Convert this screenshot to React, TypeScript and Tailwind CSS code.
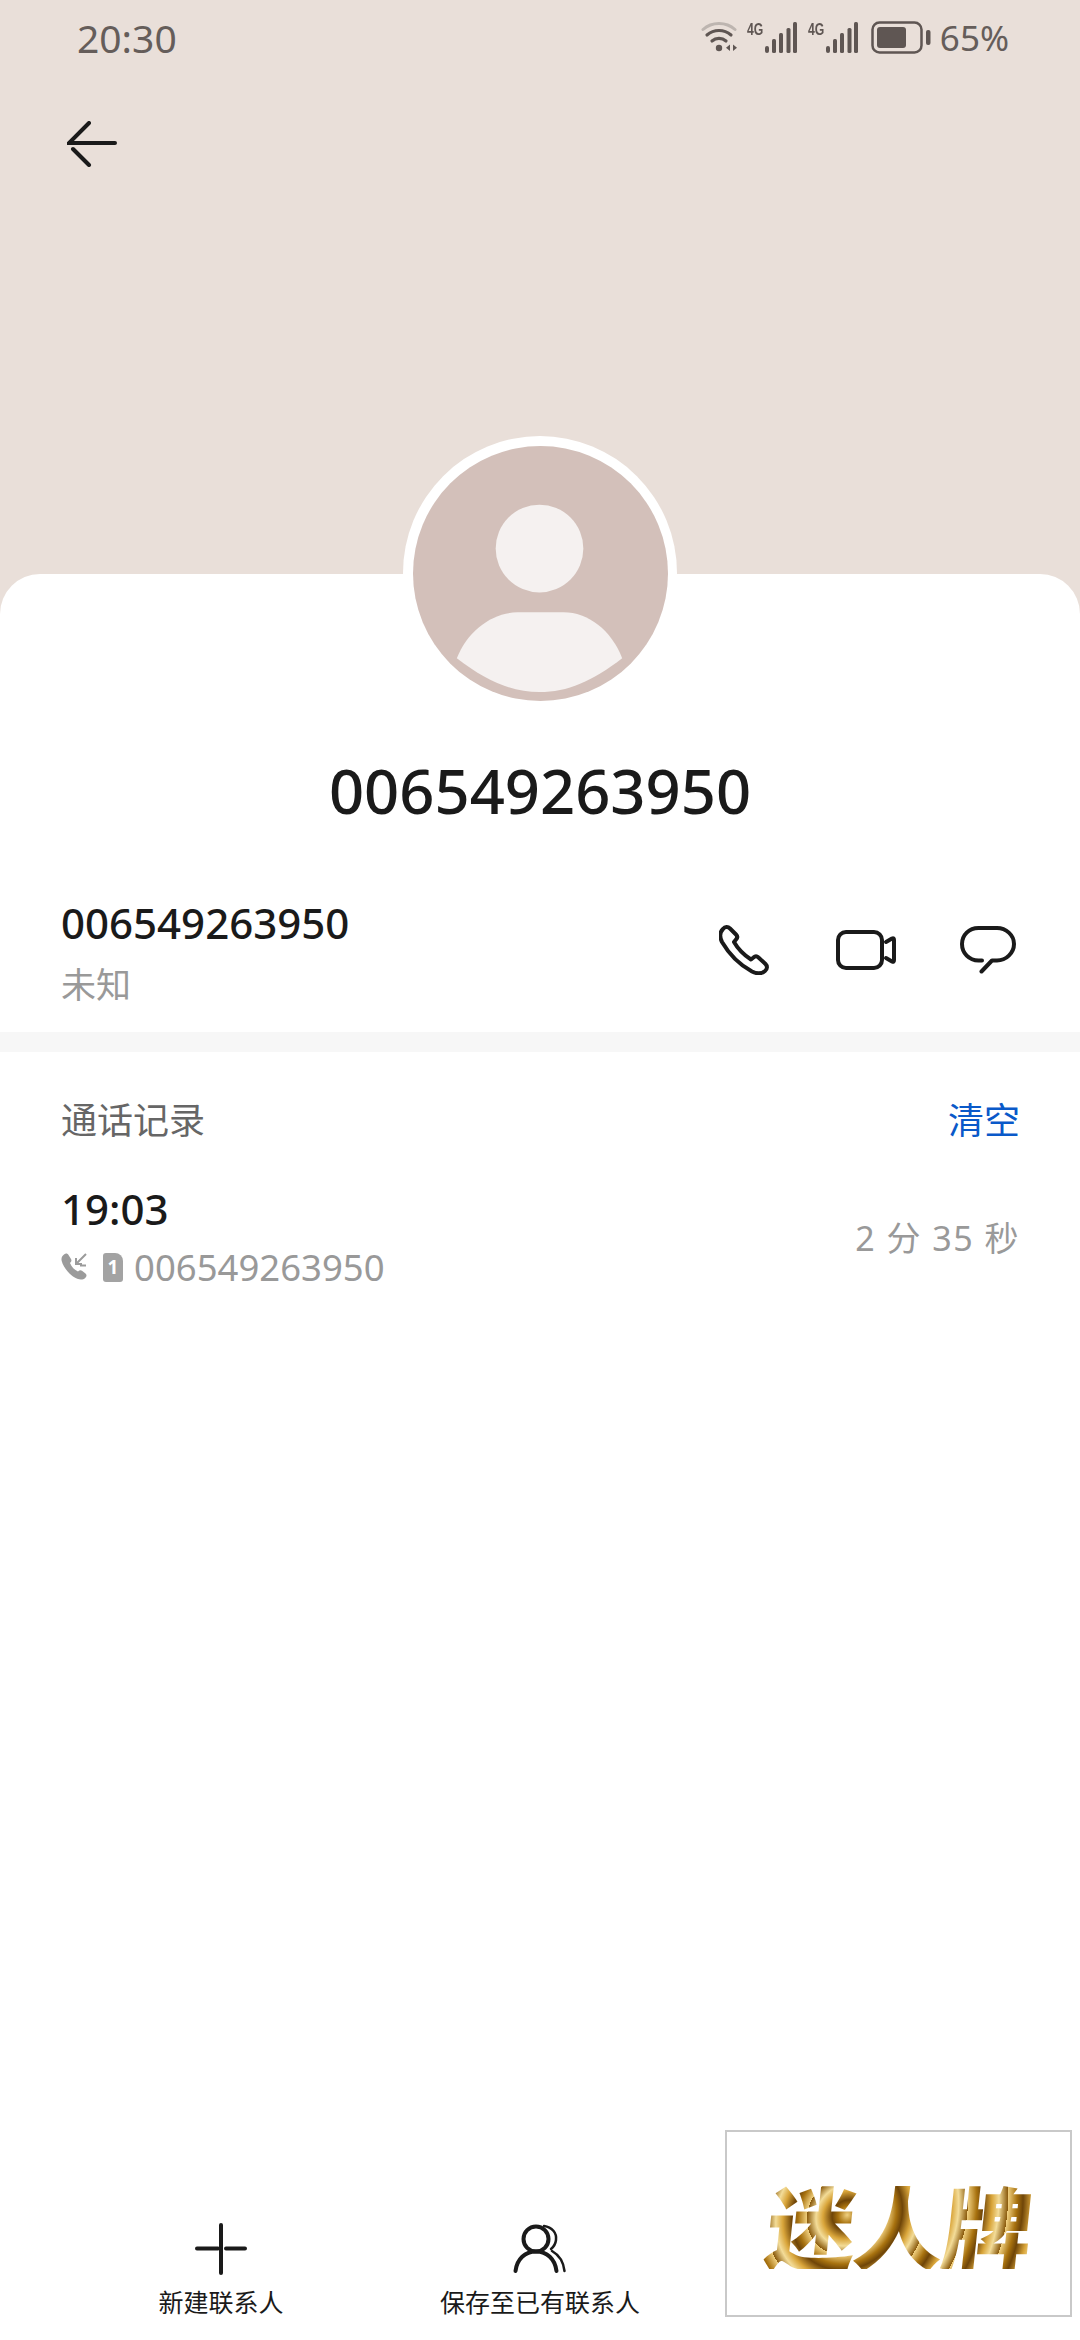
import React from "react";

const font = { fontFamily: '"Noto Sans", "Noto Sans CJK SC", sans-serif' };

function Wifi() {
  return (
    <svg width="36" height="34" viewBox="0 0 36 34" fill="none" strokeLinecap="round">
      <path d="M2 9.5C11 1.5 25 1.5 34 9.5" stroke="#bdb5b0" strokeWidth="3" />
      <path d="M6 15C13 9 23 9 30 15" stroke="#5f5653" strokeWidth="3.2" />
      <path d="M11 21C15 17.5 21 17.5 25 21" stroke="#5f5653" strokeWidth="3.2" />
      <circle cx="18" cy="28" r="3.2" fill="#5f5653" />
      <path d="M29 24.5V31L25 27.8ZM32 24.5V31L36 27.8Z" fill="#5f5653" />
    </svg>
  );
}

function Signal() {
  return (
    <div className="flex items-start">
      <span className="w-[18px] origin-left scale-x-[0.72] text-[17px] leading-[15px] font-bold text-[#5f5653]" style={{ fontFamily: '"Liberation Sans", sans-serif' }}>
        4G
      </span>
      <svg width="32" height="31" viewBox="0 0 32 31" fill="#5f5653">
        <rect x="0" y="24" width="4" height="7" rx="2" />
        <rect x="7" y="17" width="4" height="14" rx="1.5" />
        <rect x="14" y="11" width="4" height="20" rx="1.5" />
        <rect x="21.5" y="6" width="4" height="25" rx="1.5" />
        <rect x="28" y="0" width="4" height="31" rx="1.5" />
      </svg>
    </div>
  );
}

function Battery() {
  return (
    <svg width="60" height="33" viewBox="0 0 60 33" fill="none">
      <rect x="1.5" y="1.5" width="49" height="30" rx="7" stroke="#5f5653" strokeWidth="2.5" />
      <rect x="6" y="6" width="29" height="21" rx="3" fill="#5f5653" />
      <rect x="55" y="9" width="4.5" height="15" rx="2" fill="#5f5653" />
    </svg>
  );
}

function StatusBar() {
  return (
    <div className="flex h-[74px] items-center justify-between pl-[77px] pr-[71px] text-[#655d5a]">
      <span className="text-[39px] leading-none">20:30</span>
      <div className="flex items-center">
        <Wifi />
        <div className="ml-[10px] flex gap-[11px]">
          <Signal />
          <Signal />
        </div>
        <div className="ml-[13px]">
          <Battery />
        </div>
        <span className="ml-[9px] text-[35px] leading-none">65%</span>
      </div>
    </div>
  );
}

function BackArrow() {
  return (
    <svg width="50" height="46" viewBox="0 0 50 46" fill="none" stroke="#1a1a1a" strokeWidth="4" strokeLinecap="round">
      <path d="M22 2L2 22H48" />
      <path d="M6 28L22 44" />
    </svg>
  );
}

function Avatar() {
  return (
    <div className="h-[274px] w-[274px] rounded-full bg-white p-[9.5px]">
      <svg width="255" height="255" viewBox="0 0 256 256">
        <circle cx="128" cy="128" r="128" fill="#d3c0ba" />
        <circle cx="127" cy="103" r="44" fill="#f5f1f0" />
        <path d="M44 213C55 185 80 167 105 167H151C176 167 199 185 210 213C180 236 155 247 127 247C99 247 74 236 44 213Z" fill="#f5f1f0" />
      </svg>
    </div>
  );
}

function PhoneIcon() {
  return (
    <svg width="50" height="50" viewBox="0 0 50 50" fill="none" stroke="#1a1a1a" strokeWidth="4" strokeLinejoin="round">
      <path d="M4 4C6 1.5 9 1.5 11 3.5L17 9.5C18.5 11 18.5 13 17 14.5L15 17C19 24 25 30 32 34.5L34.5 32.5C36 31 38 31 39.5 32.5L46.5 39C48.5 41 48.5 44 46 46C43 48.5 38 49 33 46.5C21 40 10 29 3 17C.5 12 1 7 4 4Z" />
    </svg>
  );
}

function VideoIcon() {
  return (
    <svg width="60" height="40" viewBox="0 0 60 40" fill="none" stroke="#1a1a1a" strokeWidth="4" strokeLinecap="round" strokeLinejoin="round">
      <rect x="2" y="2" width="44" height="36" rx="8" />
      <path d="M50 12L56 8.5Q58 7.5 58 10V30Q58 32.5 56 31.5L50 28" />
    </svg>
  );
}

function MessageIcon() {
  return (
    <svg width="56" height="48" viewBox="0 0 56 48" fill="none" stroke="#1a1a1a" strokeWidth="4" strokeLinecap="round" strokeLinejoin="round">
      <path d="M22 34.5H18.5C9 34.5 2 27 2 18C2 9 9 2 18.5 2H37C46 2 54 9 54 18C54 27 46 34.5 37 34.5H32L21.5 45.5" />
    </svg>
  );
}

function CallInIcon() {
  return (
    <svg width="26" height="28" viewBox="0 0 26 28" fill="#9b9b9b">
      <path d="M3 1.5C5 0 6.5.5 7.5 2L10 6C10.8 7.5 10.5 8.5 9 10C10.5 14 13.5 17 17 18.5C18.5 17 19.8 16.8 21 17.7L24.5 20.5C26 22 25.8 23.5 24.2 25C21.5 27.5 17 27 12 23.5C6.5 19.5 2 13 .7 8C0 5 1 3 3 1.5Z" />
      <path d="M25 1L15 11M15 5V11H21M19 12.5H25" fill="none" stroke="#9b9b9b" strokeWidth="2" />
    </svg>
  );
}

function SimIcon() {
  return (
    <div className="flex h-[29px] w-[20px] items-center justify-center rounded-[3px] rounded-tr-[8px] bg-[#a3a3a3] text-[19px] leading-none font-bold text-white">
      1
    </div>
  );
}

function PlusIcon() {
  return (
    <svg width="52" height="52" viewBox="0 0 52 52" fill="none" stroke="#1a1a1a" strokeWidth="4" strokeLinecap="round">
      <path d="M26 2V50" />
      <path d="M2 25.5H23M31 25.5H50" />
    </svg>
  );
}

function PersonIcon() {
  return (
    <svg width="54" height="50" viewBox="0 0 54 50" fill="none" stroke="#1a1a1a" strokeLinecap="round">
      <circle cx="23" cy="15" r="12.5" strokeWidth="4" />
      <path d="M2.5 47C4 35 12 27.5 23 27.5C34 27.5 42 35 43.5 47" strokeWidth="4" />
      <path d="M31 2C39 3 44 9 43 16C42.5 20 40.5 23 38 25" strokeWidth="2.5" />
      <path d="M39 27C46 31 50.5 38 51.5 47" strokeWidth="2.5" />
    </svg>
  );
}

function ActionButton({ icon, label }: { icon: React.ReactNode; label: string }) {
  return (
    <div className="flex w-[260px] flex-col items-center">
      <div className="flex h-[54px] items-center justify-center">{icon}</div>
      <span className="mt-[10px] whitespace-nowrap text-[25px] leading-[32px] text-[#1a1a1a]">{label}</span>
    </div>
  );
}

function Watermark() {
  return (
    <div className="absolute left-[725px] top-[2130px] flex h-[187px] w-[347px] items-center justify-center border-2 border-[#c9c9c9] bg-white">
      <span
        className="-skew-x-6 bg-[repeating-radial-gradient(circle_at_30%_40%,#f0d080_0px,#a8720f_9px,#6f4508_15px,#d9a53a_24px,#f3dc98_31px,#8a5a0c_40px)] bg-clip-text text-[90px] leading-none font-black tracking-[-2px] text-transparent"
        style={{ fontFamily: '"Noto Sans CJK SC", sans-serif' }}
      >
        迷人牌
      </span>
    </div>
  );
}

export default function App() {
  return (
    <div className="relative flex h-[2340px] w-[1080px] flex-col overflow-hidden bg-white" style={font}>
      <div className="h-[614px] shrink-0 bg-[#e9dfd9]">
        <StatusBar />
        <div className="ml-[67px] mt-[47px]">
          <BackArrow />
        </div>
      </div>

      <div className="-mt-[40px] flex flex-1 flex-col rounded-t-[40px] bg-white">
        <div className="-mt-[138px] flex justify-center">
          <Avatar />
        </div>
        <h1 className="mt-[40px] text-center text-[61.5px] leading-[80px] font-medium text-[#1a1a1a]">006549263950</h1>

        <div className="mt-[65px] flex h-[131px] items-start justify-between pl-[61px] pr-[64px]">
          <div className="flex flex-col">
            <span className="text-[42px] leading-[56px] font-medium text-[#1a1a1a]">006549263950</span>
            <span className="mt-[9px] text-[35px] leading-[50px] text-[#999999]">未知</span>
          </div>
          <div className="mt-[30px] flex items-center">
            <PhoneIcon />
            <div className="ml-[67px]">
              <VideoIcon />
            </div>
            <div className="ml-[64px]">
              <MessageIcon />
            </div>
          </div>
        </div>

        <div className="mt-[6px] h-[20px] bg-[#f7f7f7]" />

        <div className="mt-[44px] flex items-center justify-between pl-[61px] pr-[60px] text-[36px] leading-[50px]">
          <span className="text-[#666666]">通话记录</span>
          <span className="text-[#0a59c9]">清空</span>
        </div>

        <div className="mt-[35px] flex items-center justify-between pl-[61px] pr-[60px]">
          <div className="flex flex-col">
            <span className="text-[42px] leading-[56px] font-medium text-[#1a1a1a]">19:03</span>
            <div className="mt-[5px] flex items-center">
              <CallInIcon />
              <div className="ml-[16px]">
                <SimIcon />
              </div>
              <span className="ml-[11px] text-[36.5px] leading-[50px] text-[#999999]">006549263950</span>
            </div>
          </div>
          <span className="mt-[3px] text-[34px] leading-[50px] tracking-[1.5px] text-[#999999]">2 分 35 秒</span>
        </div>

        <div className="mt-auto mb-[22px] flex">
          <div className="ml-[91px]">
            <ActionButton icon={<PlusIcon />} label="新建联系人" />
          </div>
          <div className="ml-[59px]">
            <ActionButton icon={<PersonIcon />} label="保存至已有联系人" />
          </div>
        </div>
      </div>

      <Watermark />
    </div>
  );
}
